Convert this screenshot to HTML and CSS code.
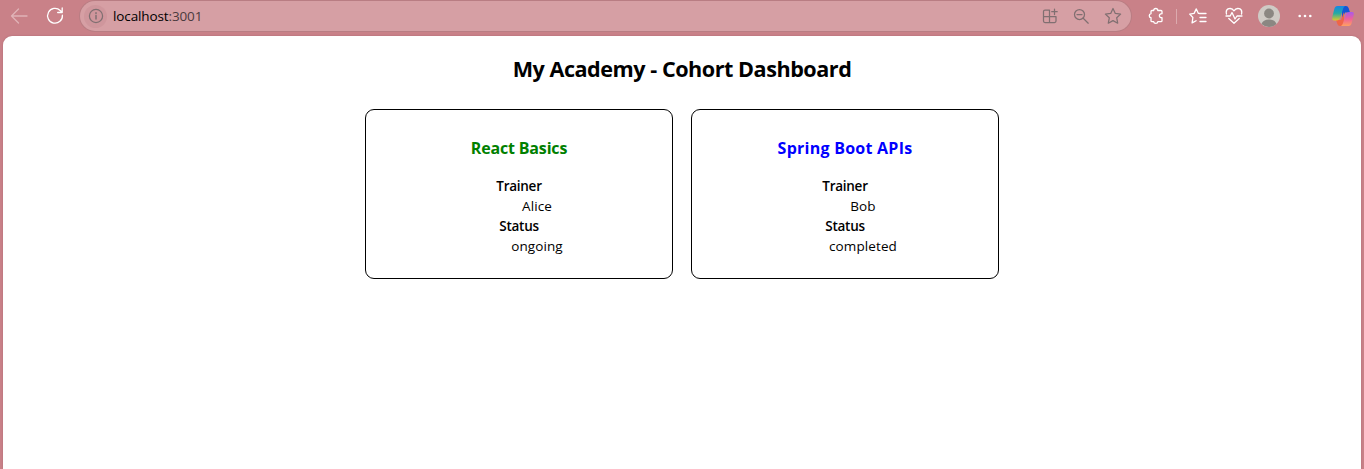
FILE: index.html
```html
<!DOCTYPE html>
<html lang="en">
<head>
<meta charset="utf-8">
<title>My Academy</title>
<link rel="stylesheet" href="styles.css">
</head>
<body>
<header class="toolbar">
  <div class="nav">
    <svg class="icon back" width="18" height="18" viewBox="0 0 18 18"><path d="M17 9H1.5M8.500 2 1.500 9l7 7"/></svg>
    <svg class="icon" width="18" height="18" viewBox="0 0 18 18"><path d="M16.400 8.200a7.400 7.400 0 1 1-2.200-4.700L16 5.200M16.200 1v4.500h-4.500"/></svg>
  </div>
  <div class="address">
    <span class="info"><svg class="icon muted" width="16" height="16" viewBox="0 0 16 16"><circle cx="8" cy="8" r="6.600"/><path d="M8 7.500v3.500M8 4.800v.6" stroke-width="1.500"/></svg></span>
    <span class="url">localhost<span class="port">:3001</span></span>
    <div class="actions">
      <svg class="icon muted" width="16" height="16" viewBox="0 0 16 16"><path d="M7.500 2H3Q1.500 2 1.500 3.500v9.500Q1.500 14.500 3 14.500h9.500q1.500 0 1.500-1.500V8.500H1.500M7.500 2v12.500M12.500 1v5.500M9.700 3.700h5.500"/></svg>
      <svg class="icon muted" width="16" height="16" viewBox="0 0 16 16"><circle cx="6.500" cy="6.500" r="5"/><path d="m10.200 10.200 5 5M4 6.500h5"/></svg>
      <svg class="icon muted" width="18" height="18" viewBox="0 0 18 18"><path d="m9 1.500 2.300 4.900 5.300.7-3.900 3.700 1 5.400L9 13.600l-4.700 2.600 1-5.400-3.900-3.700 5.300-.7z"/></svg>
    </div>
  </div>
  <div class="tools">
    <svg class="icon" width="16" height="18" viewBox="0 0 16 18"><path d="M4 3.500h1.700C5.800.8 9.700.8 9.800 3.500H13q1 0 1 1v2.200c-3.500-.2-3.500 4.300 0 4v3q0 1-1 1H9.800c-.2 2.300-3.900 2.300-4.100 0H4q-1 0-1-1v-3c-2.300-.2-2.300-3.800 0-4V4.500q0-1 1-1z"/></svg>
    <span class="divider"></span>
    <svg class="icon" width="18" height="18" viewBox="0 0 18 18"><path d="M10.500 6.400H9.400L7.300 1.900 5.100 6.400l-4.400.7 3.200 3.400-.8 5.400 4-2.200M10.500 6.500H17M11 10.500h6M11 14.500h6"/></svg>
    <svg class="icon" width="18" height="18" viewBox="0 0 18 18"><path d="M1.500 7C0 1 6.500 0 9 3.800 11.500 0 18 1 16.500 7M3.800 11.500 9 16.300l5.200-4.800M1 9h4.200L7 5.500l3 6.500 2-3h5"/></svg>
    <svg class="avatar" width="22" height="22" viewBox="0 0 22 22"><circle cx="11" cy="11" r="11" fill="#cfcac5"/><circle cx="11" cy="8.500" r="4.900" fill="#8b8782"/><path d="M3.500 19Q5 14.500 11 14.500t7.500 4.500A11 11 0 0 1 3.500 19z" fill="#8b8782"/></svg>
    <svg class="dots" width="16" height="4" viewBox="0 0 16 4"><circle cx="2.700" cy="2" r="1.300"/><circle cx="8" cy="2" r="1.300"/><circle cx="13.300" cy="2" r="1.300"/></svg>
    <svg class="copilot" width="24" height="22" viewBox="0 0 24 22">
      <defs>
        <linearGradient id="cool" x1="0" y1="0" x2="0" y2="1"><stop offset="0" stop-color="#1686e5"/><stop offset=".5" stop-color="#24aaa4"/><stop offset="1" stop-color="#e0c62b"/></linearGradient>
        <linearGradient id="warm" x1="0" y1="0" x2="0" y2="1"><stop offset="0" stop-color="#a858ee"/><stop offset=".5" stop-color="#ef6199"/><stop offset="1" stop-color="#ffa160"/></linearGradient>
      </defs>
      <path d="M11 1h4q2 0 2.600 2l1.400 4.500h-5l-3 7z" fill="#1455d5"/>
      <path d="M13 21H9q-2 0-2.600-2L5 15h5l3-8z" fill="#ef6548"/>
      <path d="M6.500 1H14q-1.500 1-2 3L9.500 12q-1 3.500-4 3.500H3Q.7 15.500 1.300 12l2-8Q4 1 6.500 1z" fill="url(#cool)"/>
      <path d="M17.500 21H10q1.500-1 2-3l2.500-8q1-3 4-3H21q2.300 0 1.700 3l-2 8q-.7 3-3.200 3z" fill="url(#warm)"/>
    </svg>
  </div>
</header>
<main class="page">
  <h1 class="title">My Academy - Cohort Dashboard</h1>
  <div class="cards">
    <section class="card">
      <h3 class="course ongoing">React Basics</h3>
      <dl class="details"><dt>Trainer</dt><dd>Alice</dd><dt>Status</dt><dd>ongoing</dd></dl>
    </section>
    <section class="card">
      <h3 class="course completed">Spring Boot APIs</h3>
      <dl class="details"><dt>Trainer</dt><dd>Bob</dd><dt>Status</dt><dd>completed</dd></dl>
    </section>
  </div>
</main>
</body>
</html>
```
FILE: styles.css
```css
* { box-sizing: border-box; }
body {
  margin: 0;
  height: 469px;
  overflow: hidden;
  display: flex;
  flex-direction: column;
  background: #c98188;
  font-family: "Open Sans", "Noto Sans", sans-serif;
  color: #000;
}
.toolbar { display: flex; height: 36px; padding: 0 9px 4px 10px; align-items: center; }
.nav { display: flex; flex: none; gap: 18px; width: 70px; }
.icon { display: block; flex: none; fill: none; stroke: #fff; stroke-width: 1.3; stroke-linejoin: round; stroke-linecap: round; }
.back { stroke: #e0b3b7; }
.muted { stroke: #806f71; stroke-width: 1.25; }
.address {
  display: flex;
  flex: none;
  align-items: center;
  width: 1051px;
  height: 30px;
  padding: 0 9px 0 4px;
  border-radius: 15px;
  background: #d69fa4;
  box-shadow: 0 0 0 1px #b97d83;
}
.info { display: flex; align-items: center; justify-content: center; width: 23px; height: 23px; border-radius: 50%; background: #cf969c; }
.url { margin-left: 6px; font-size: 13.5px; letter-spacing: -.12px; }
.port { color: #4b3b3e; }
.actions { display: flex; align-items: center; gap: 15px; margin-left: auto; }
.tools { display: flex; flex: none; align-items: center; margin-left: 17px; }
.divider { width: 1px; height: 15px; margin: 0 12px; background: #dcaaae; }
.divider + .icon { margin-right: 18px; }
.avatar { display: block; margin: 0 17px 0 15px; }
.dots { display: block; fill: #fff; }
.copilot { display: block; margin-left: 18px; }
.page { flex: 1; margin: 0 3px; padding-top: 18px; border-radius: 9px 9px 0 0; background: #fff; box-shadow: 0 0 2px #ac6971; }
.title { margin: 0; font-size: 21.6px; line-height: 29px; font-weight: 700; text-align: center; letter-spacing: -.47px; }
.cards { display: flex; justify-content: center; gap: 18px; margin-top: 26px; }
.card { width: 308px; height: 170px; padding-top: 26px; border: 1px solid #000; border-radius: 9px; text-align: center; }
.course { margin: 0; font-size: 16px; line-height: 24px; font-weight: 700; }
.ongoing { color: #008000; letter-spacing: -.17px; }
.completed { color: #0000ff; letter-spacing: .25px; }
.details { margin: 16px 0 0; font-size: 13.5px; line-height: 20px; }
.details dt { font-weight: 600; letter-spacing: -.25px; }
.details dd { margin: 0 0 0 36px; letter-spacing: .1px; }
```
